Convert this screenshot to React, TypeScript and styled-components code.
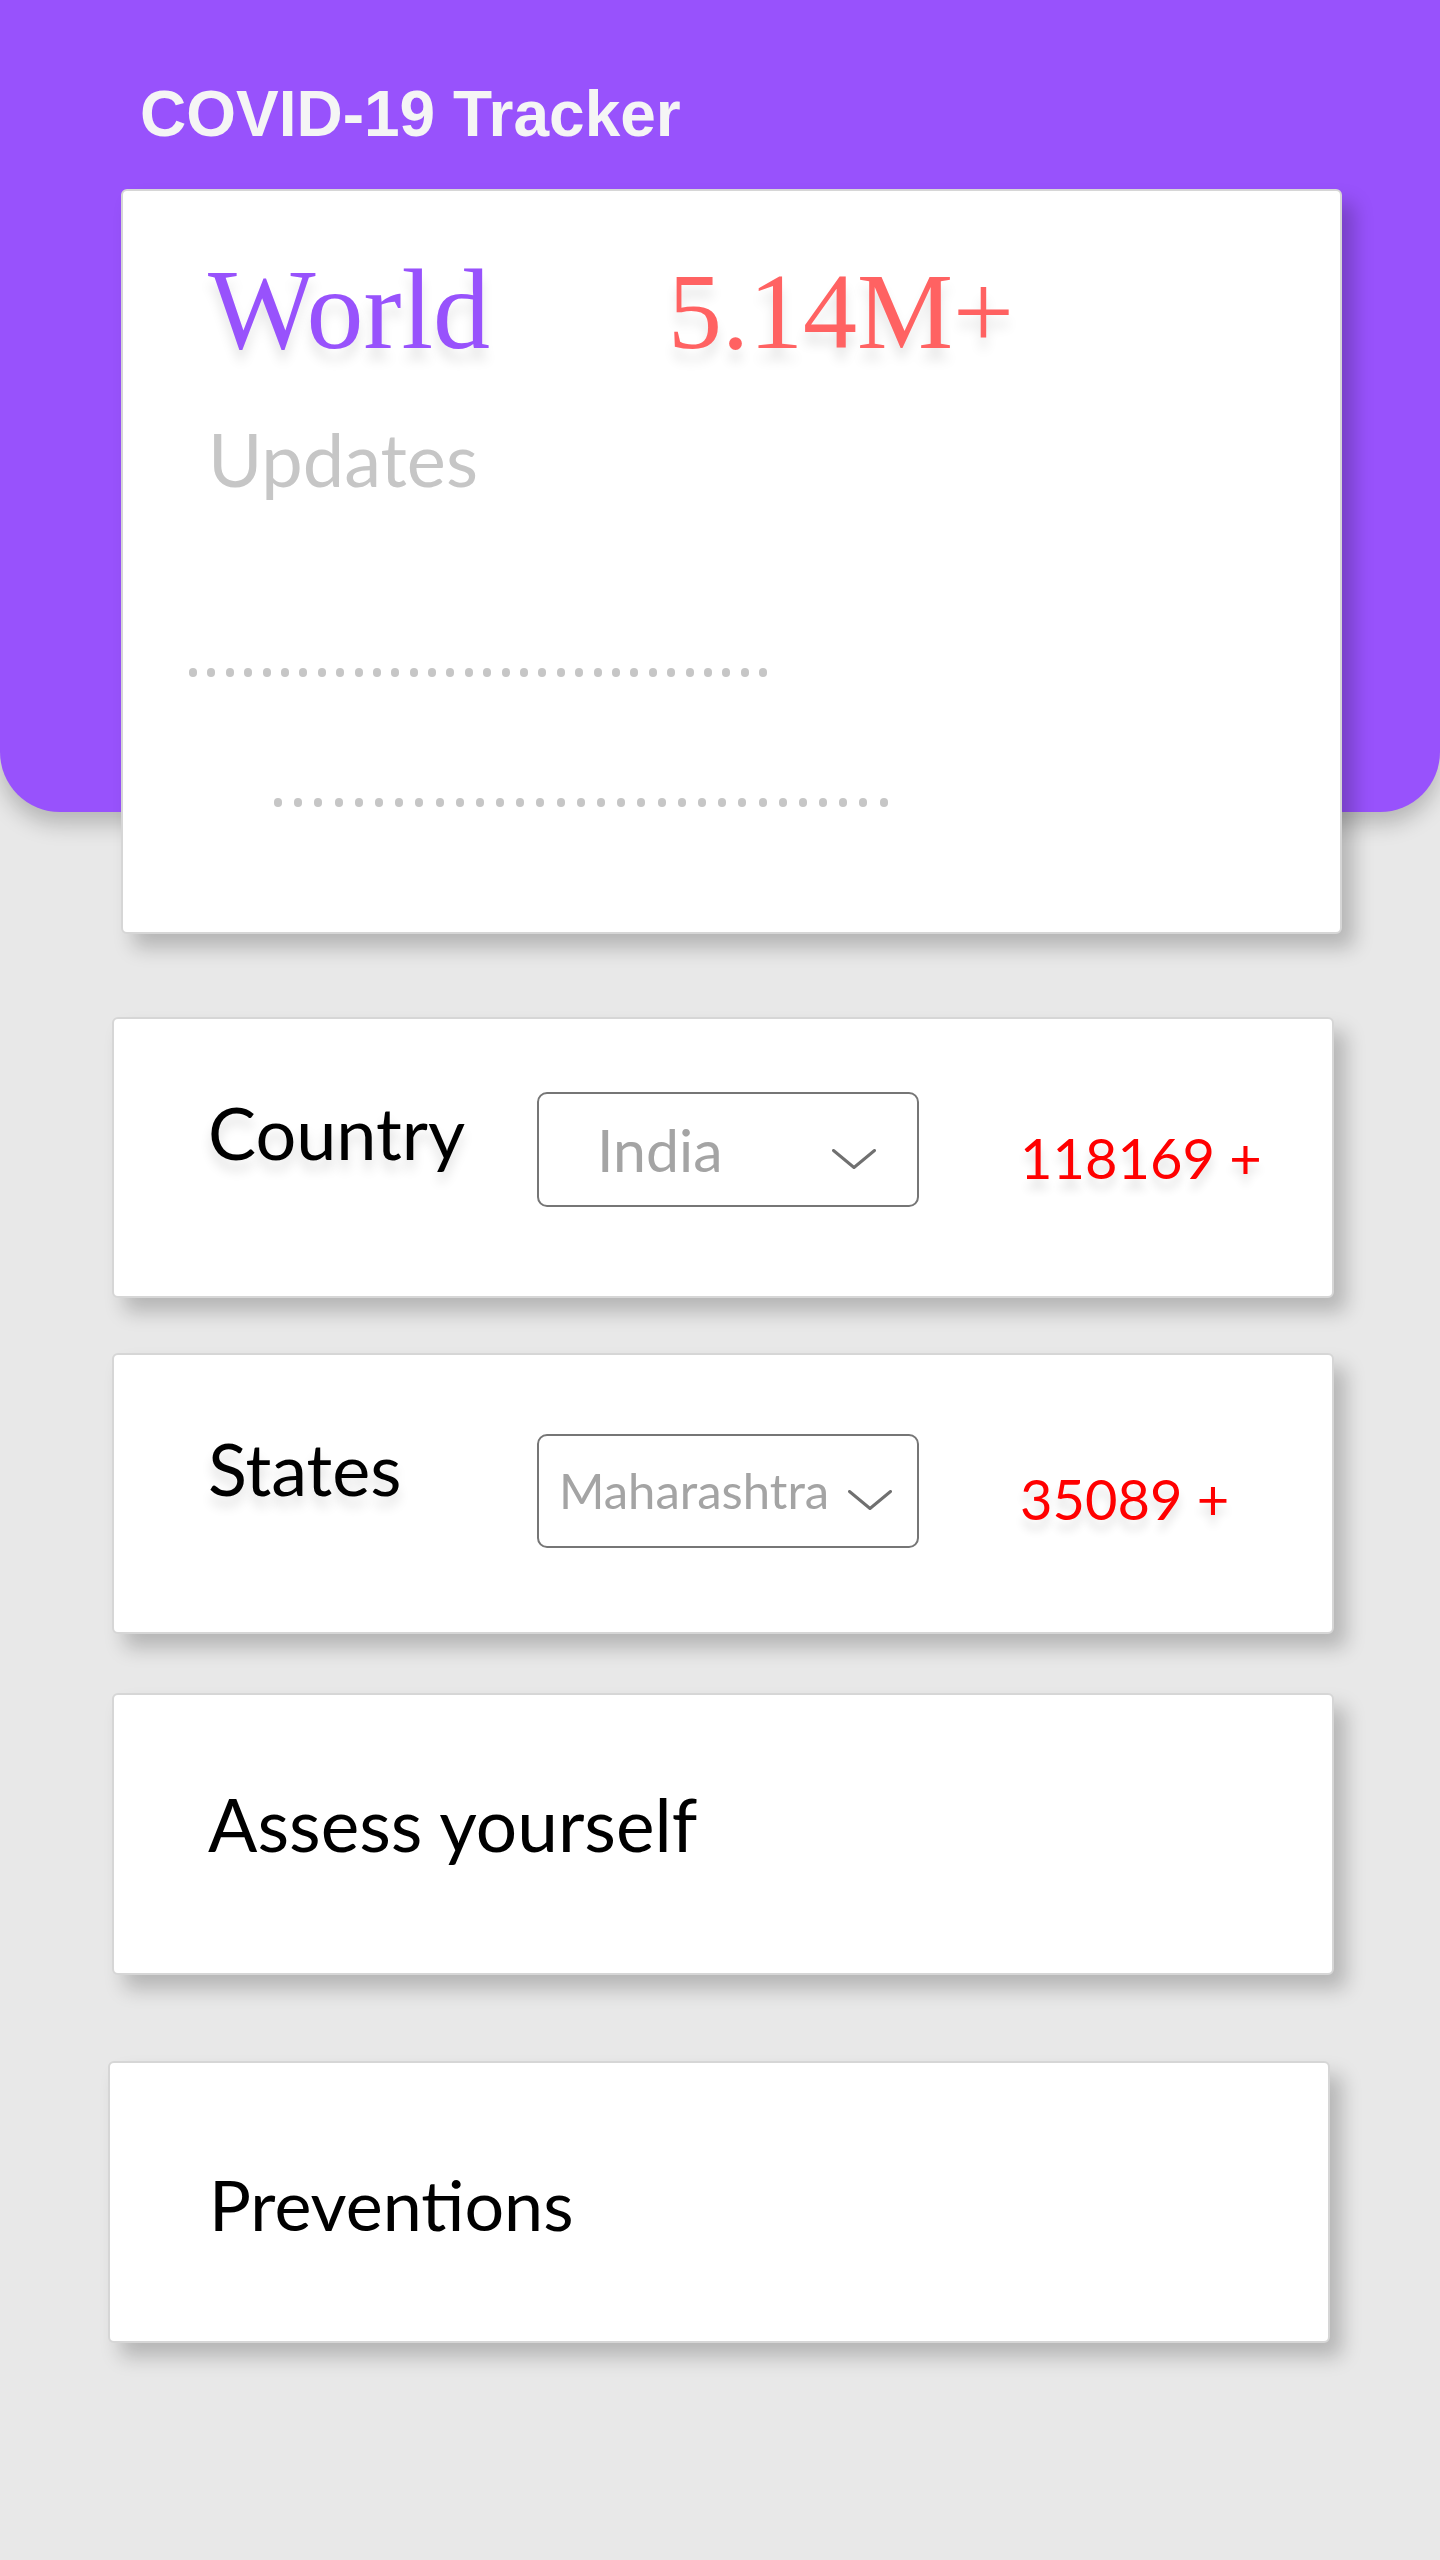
import React from "react";
import styled, { createGlobalStyle } from "styled-components";

const GlobalStyle = createGlobalStyle`
  html, body {
    margin: 0;
    padding: 0;
    background: #e8e8e8;
  }
  body {
    font-family: Lato, "Open Sans", sans-serif;
  }
`;

const Page = styled.div`
  width: 1440px;
  min-height: 2560px;
  background: #e8e8e8;
  display: flex;
  flex-direction: column;
`;

const Header = styled.header`
  background: #9852fc;
  border-radius: 0 0 60px 60px;
  padding-top: 82px;
  box-shadow: 0 12px 22px rgba(0, 0, 0, 0.22);
  display: flex;
  flex-direction: column;
  position: relative;
`;

const Title = styled.h1`
  margin: 0 0 0 140px;
  font-family: "Liberation Sans", Arial, sans-serif;
  font-weight: 700;
  font-size: 64px;
  line-height: 1;
  color: #f5f5f5;
`;

const WorldCard = styled.section`
  margin: 43px 0 -122px 121px;
  width: 1221px;
  height: 745px;
  box-sizing: border-box;
  background: #ffffff;
  border: 2px solid #d6d6d6;
  border-radius: 6px;
  box-shadow: 12px 14px 20px rgba(0, 0, 0, 0.22);
  padding-top: 62px;
  display: flex;
  flex-direction: column;
`;

const WorldRow = styled.div`
  display: flex;
  align-items: baseline;
  margin-left: 85px;
`;

const BigSerif = styled.span<{ $color: string; $width?: number; $size: number }>`
  font-family: "Liberation Serif", "Times New Roman", serif;
  font-size: ${(p) => p.$size}px;
  line-height: 1;
  color: ${(p) => p.$color};
  width: ${(p) => (p.$width ? `${p.$width}px` : "auto")};
  flex: none;
  text-shadow: 0 12px 12px rgba(0, 0, 0, 0.1);
`;

const Updates = styled.div`
  margin: 55px 0 0 85px;
  font-family: Lato, "Open Sans", sans-serif;
  font-size: 74px;
  line-height: 1;
  color: #c6c6c6;
`;

const DotRow = styled.div<{ $top: number; $left: number; $gap: number }>`
  display: flex;
  gap: ${(p) => p.$gap}px;
  margin: ${(p) => p.$top}px 0 0 ${(p) => p.$left}px;
`;

const Dot = styled.span`
  width: 8px;
  height: 9px;
  border-radius: 4px;
  background: #c6c6c6;
  flex: none;
`;

const Stack = styled.main`
  display: flex;
  flex-direction: column;
  align-items: flex-start;
  padding: 205px 0 120px;
`;

const Card = styled.section<{ $left: number; $top: number; $height: number; $pad: number }>`
  margin: ${(p) => p.$top}px 0 0 ${(p) => p.$left}px;
  width: 1222px;
  height: ${(p) => p.$height}px;
  box-sizing: border-box;
  background: #ffffff;
  border: 2px solid #d6d6d6;
  border-radius: 6px;
  box-shadow: 12px 14px 20px rgba(0, 0, 0, 0.22);
  display: flex;
  align-items: flex-start;
  padding-left: ${(p) => p.$pad}px;
`;

const Label = styled.div<{ $top: number; $shadow?: boolean; $width?: number; $size?: number }>`
  margin-top: ${(p) => p.$top}px;
  width: ${(p) => (p.$width ? `${p.$width}px` : "auto")};
  flex: none;
  font-family: Lato, "Open Sans", sans-serif;
  font-size: ${(p) => p.$size ?? 72}px;
  line-height: 1;
  color: #000000;
  text-shadow: ${(p) => (p.$shadow ? "0 10px 12px rgba(0,0,0,0.13)" : "none")};
`;

const Select = styled.div<{ $top: number; $height: number }>`
  margin-top: ${(p) => p.$top}px;
  width: 382px;
  height: ${(p) => p.$height}px;
  box-sizing: border-box;
  border: 2px solid #767676;
  border-radius: 10px;
  display: flex;
  align-items: flex-start;
  flex: none;
`;

const SelectValue = styled.span<{ $top: number; $left: number; $size: number }>`
  margin: ${(p) => p.$top}px 0 0 ${(p) => p.$left}px;
  font-family: Lato, "Open Sans", sans-serif;
  font-size: ${(p) => p.$size}px;
  line-height: 1;
  color: #a4a4a4;
  white-space: nowrap;
`;

const Chevron = styled.svg<{ $top: number; $right: number }>`
  margin: ${(p) => p.$top}px ${(p) => p.$right}px 0 auto;
  width: 44px;
  height: 20px;
  flex: none;
`;

const Count = styled.div<{ $top: number }>`
  margin: ${(p) => p.$top}px 0 0 101px;
  font-family: Lato, "Open Sans", sans-serif;
  font-size: 56px;
  line-height: 1;
  color: #ff0000;
  text-shadow: 0 10px 10px rgba(0, 0, 0, 0.12);
  white-space: nowrap;
`;

const ChevronIcon = ({ top, right }: { top: number; right: number }) => (
  <Chevron $top={top} $right={right} viewBox="0 0 44 20">
    <polyline
      points="1.5,1.5 22,18.5 42.5,1.5"
      fill="none"
      stroke="#707070"
      strokeWidth="3"
      strokeLinecap="round"
      strokeLinejoin="round"
    />
  </Chevron>
);

const dots = (n: number) =>
  Array.from({ length: n }, (_, i) => <Dot key={i} />);

export default function App() {
  return (
    <Page>
      <GlobalStyle />
      <Header>
        <Title>COVID-19 Tracker</Title>
        <WorldCard>
          <WorldRow>
            <BigSerif $color="#9852fc" $width={460} $size={114}>
              World
            </BigSerif>
            <BigSerif $color="#ff6262" $size={108}>
              5.14M+
            </BigSerif>
          </WorldRow>
          <Updates>Updates</Updates>
          <DotRow $top={172} $left={66} $gap={10.4}>
            {dots(32)}
          </DotRow>
          <DotRow $top={121} $left={151} $gap={12.2}>
            {dots(31)}
          </DotRow>
        </WorldCard>
      </Header>
      <Stack>
        <Card $left={112} $top={0} $height={281} $pad={94}>
          <Label $top={77} $width={329} $shadow>
            Country
          </Label>
          <Select $top={73} $height={115}>
            <SelectValue $top={26} $left={58} $size={59}>
              India
            </SelectValue>
            <ChevronIcon top={55} right={41} />
          </Select>
          <Count $top={111}>118169 +</Count>
        </Card>
        <Card $left={112} $top={55} $height={281} $pad={94}>
          <Label $top={77} $width={329} $shadow>
            States
          </Label>
          <Select $top={79} $height={114}>
            <SelectValue $top={30} $left={20} $size={49}>
              Maharashtra
            </SelectValue>
            <ChevronIcon top={54} right={25} />
          </Select>
          <Count $top={116}>35089 +</Count>
        </Card>
        <Card $left={112} $top={59} $height={282} $pad={94}>
          <Label $top={93} $size={73}>
            Assess yourself
          </Label>
        </Card>
        <Card $left={108} $top={86} $height={282} $pad={99}>
          <Label $top={106} $size={70}>
            Preventions
          </Label>
        </Card>
      </Stack>
    </Page>
  );
}
